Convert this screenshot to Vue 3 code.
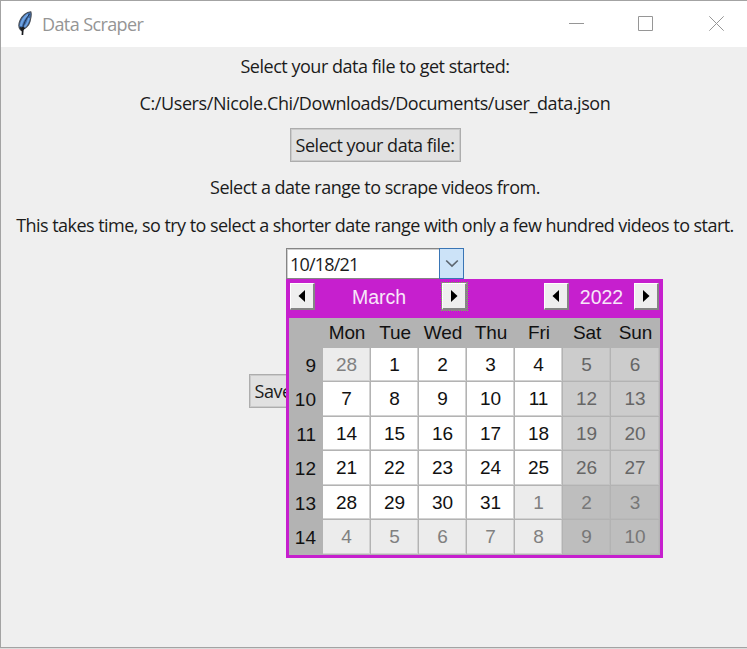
<script setup>
const days = ['Mon', 'Tue', 'Wed', 'Thu', 'Fri', 'Sat', 'Sun']
const weeks = [
  { no: 9, dates: [28, 1, 2, 3, 4, 5, 6] },
  { no: 10, dates: [7, 8, 9, 10, 11, 12, 13] },
  { no: 11, dates: [14, 15, 16, 17, 18, 19, 20] },
  { no: 12, dates: [21, 22, 23, 24, 25, 26, 27] },
  { no: 13, dates: [28, 29, 30, 31, 1, 2, 3] },
  { no: 14, dates: [4, 5, 6, 7, 8, 9, 10] },
]
const isOther = (row, d) => (row === 0 && d > 20) || (row > 3 && d < 15)
</script>

<template>
  <div class="window">
    <header class="titlebar">
      <svg class="feather" width="16" height="26" viewBox="0 0 16 26">
        <path d="M13.8 1.8C9.5 2 5 6 3 10.5C1.7 13.5 1.3 17.5 3.5 20C8 19.5 12 15.5 13 11.5C13.8 8 15 4.5 13.8 1.8Z" fill="#3f6ca8" stroke="#4a4e55" stroke-width="1.1" />
        <path d="M11 4.5C7.5 7 4.6 11.5 3.8 16" fill="none" stroke="#6fa3e2" stroke-width="2.2" />
        <path d="M12 8C11 12 9.5 15 7.5 16.8" fill="none" stroke="#6fa3e2" stroke-width="1.8" />
        <path d="M12.5 4C9 9 6.4 14 5.5 19" fill="none" stroke="#24354f" stroke-width="1" />
        <path d="M6 17L5.4 25" fill="none" stroke="#17191d" stroke-width="1.7" />
        <path d="M2.5 17L4.5 21.5L8.5 18Z" fill="#1c1c1c" />
      </svg>
      <span class="title">Data Scraper</span>
      <svg class="controls" width="156" height="16" viewBox="0 0 156 16" fill="none" stroke="#969696">
        <path d="M0 7.5H15M69.5 .5H83.5V14.5H69.5Z" />
        <path d="M140.3 .3L154.7 14.7M154.7 .3L140.3 14.7" />
      </svg>
    </header>

    <main class="content">
      <p class="line l1"><span>Select your data file to get started:</span></p>
      <p class="line l2"><span>C:/Users/Nicole.Chi/Downloads/Documents/user_data.json</span></p>
      <button class="btn pick"><span>Select your data file:</span></button>
      <p class="line l3"><span>Select a date range to scrape videos from.</span></p>
      <p class="line l4"><span>This takes time, so try to select a shorter date range with only a few hundred videos to start.</span></p>

      <div class="date-entry">
        <div class="value">10/18/21</div>
        <div class="drop">
          <svg width="14" height="9" viewBox="0 0 14 9"><path d="M1.2 1.5L7 7L12.8 1.5" fill="none" stroke="#5c6670" stroke-width="1.7" /></svg>
        </div>
        <section class="calendar">
          <div class="cal-head">
            <button class="arrow"><svg width="8" height="12" viewBox="0 0 8 12"><path d="M7 0V12L0.5 6Z" /></svg></button>
            <span class="month">March</span>
            <button class="arrow focused"><svg width="8" height="12" viewBox="0 0 8 12"><path d="M1 0V12L7.5 6Z" /></svg></button>
            <span class="spacer"></span>
            <button class="arrow"><svg width="8" height="12" viewBox="0 0 8 12"><path d="M7 0V12L0.5 6Z" /></svg></button>
            <span class="year">2022</span>
            <button class="arrow"><svg width="8" height="12" viewBox="0 0 8 12"><path d="M1 0V12L7.5 6Z" /></svg></button>
          </div>
          <div class="grid">
            <div class="hd"></div>
            <div v-for="d in days" :key="d" class="hd">{{ d }}</div>
            <template v-for="(w, r) in weeks" :key="w.no">
              <div class="wk">{{ w.no }}</div>
              <div v-for="(d, c) in w.dates" :key="c" class="day" :class="{ weekend: c > 4, other: isOther(r, d) }">{{ d }}</div>
            </template>
          </div>
        </section>
      </div>

      <button class="btn save"><span>Save</span></button>
    </main>
  </div>
</template>

<style>
body { margin: 0; background: #dcdcdc; overflow: hidden; }
</style>

<style scoped>
.window { box-sizing: border-box; width: 747px; height: 648px; border: 1px solid #a3a3a3; border-right: 0; background: #efefef; font-family: "Open Sans", "Noto Sans", sans-serif; color: #1b1b1b; }
.titlebar { display: flex; height: 46px; background: #fff; }
.feather { margin: 9px 0 0 16px; }
.title { margin-left: 9px; font-size: 18px; line-height: 47px; letter-spacing: -0.6px; color: #959595; }
.controls { margin: 15px 22px 0 auto; }
.content { display: flex; flex-direction: column; align-items: center; padding-left: 2px; }
p { margin: 0; }
.line { height: 38px; font-size: 18px; line-height: 36px; white-space: nowrap; }
.line span { display: inline-block; }
.l1 { line-height: 38px; letter-spacing: -0.48px; }
.l2 { letter-spacing: -0.41px; }
.l3 { letter-spacing: -0.5px; }
.l4 { letter-spacing: -0.545px; }
.btn { box-sizing: border-box; height: 34px; padding: 0; border: 1px solid #adadad; box-shadow: inset 0 0 0 1px #cbcbcb; background: #e1e1e1; font: 18px/32px "Open Sans", "Noto Sans", sans-serif; color: #1b1b1b; letter-spacing: -0.48px; white-space: nowrap; }
.pick { width: 171px; margin: 5px 0 7px; }
.date-entry { position: relative; display: flex; box-sizing: border-box; width: 178px; height: 31px; margin-top: 3px; }
.value { flex: 1; box-sizing: border-box; border: 1px solid #858585; border-right: 0; box-shadow: inset 1px 1px #cfcfcf; padding-left: 3px; background: #fff; font-size: 18px; line-height: 30px; letter-spacing: -0.8px; }
.drop { box-sizing: border-box; display: flex; align-items: center; justify-content: center; width: 25px; border: 1px solid #3975b5; background: #cce3f8; }
.calendar { position: absolute; z-index: 1; left: 0; top: 31px; box-sizing: border-box; width: 377px; height: 279px; padding: 0 3px 3px; background: #c61fce; font-family: "Liberation Sans", Arial, sans-serif; }
.cal-head { display: flex; align-items: flex-start; height: 39px; padding: 4px 1px 0 1px; box-sizing: border-box; color: #f8e6f9; font-size: 19.5px; line-height: 28px; }
.month { width: 127px; padding-left: 1px; box-sizing: border-box; text-align: center; }
.year { width: 65px; text-align: center; }
.spacer { flex: 1; }
.arrow { display: flex; align-items: center; justify-content: center; box-sizing: border-box; width: 25px; height: 27px; padding: 0; border: 1px solid #fff; border-right: 2px solid #858585; border-bottom: 2px solid #858585; background: #efefef; }
.focused { outline: 1px dotted #62d843; outline-offset: 0; }
.grid { display: grid; grid-template-columns: 34px repeat(6, 48px) 49px; grid-template-rows: 30px 34px 35px 34px 35px 34px 35px; height: 237px; background: #b3b3b3; font-size: 19px; text-align: center; color: #111; }
.hd { line-height: 29px; letter-spacing: -0.1px; }
.wk { box-sizing: border-box; padding-right: 7px; text-align: right; line-height: 36px; }
.day { box-sizing: border-box; border-right: 1px solid #b3b3b3; border-bottom: 1px solid #b3b3b3; box-shadow: inset -1px -1px #d2d2d2; background: #fff; line-height: 33px; }
.weekend { background: #cccccc; color: #666; box-shadow: inset -1px -1px #c2c2c2; }
.other { background: #ececec; color: #808080; }
.weekend.other { background: #bebebe; color: #777; box-shadow: inset -1px -1px #b9b9b9; }
.save { width: 253px; margin-top: 95px; padding-left: 5px; text-align: left; }
</style>
